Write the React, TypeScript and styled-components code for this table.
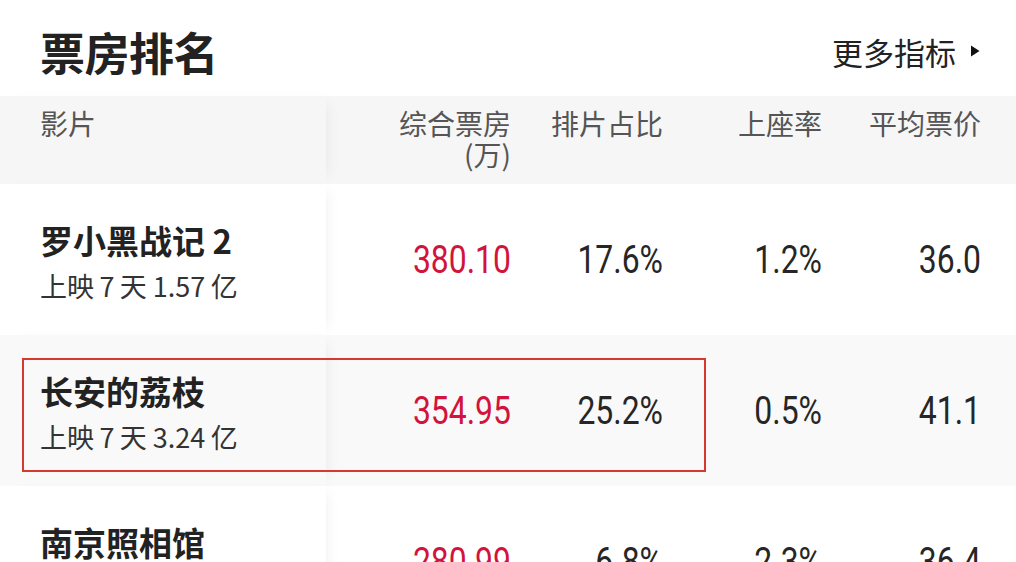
import styled, { createGlobalStyle } from "styled-components";

interface Movie {
  name: string;
  days: string;
  total: string;
  boxOffice: string;
  share: string;
  seat: string;
  price: string;
}

const movies: Movie[] = [
  { name: "罗小黑战记 2", days: "上映\u20097\u2009天", total: "1.57\u2009亿", boxOffice: "380.10", share: "17.6%", seat: "1.2%", price: "36.0" },
  { name: "长安的荔枝", days: "上映\u20097\u2009天", total: "3.24\u2009亿", boxOffice: "354.95", share: "25.2%", seat: "0.5%", price: "41.1" },
  { name: "南京照相馆", days: "上映\u20097\u2009天", total: "2.01\u2009亿", boxOffice: "280.99", share: "6.8%", seat: "2.3%", price: "36.4" },
];

const GlobalStyle = createGlobalStyle`
  html, body {
    margin: 0;
    padding: 0;
    background: #ffffff;
  }
  body {
    font-family: "Noto Sans CJK SC", "Noto Sans", sans-serif;
    color: #222222;
    overflow: hidden;
  }
`;

const App = () => {
  return (
    <>
      <GlobalStyle />
      <Page>
        <TopBar>
          <Title>票房排名</Title>
          <MoreLink>
            更多指标
            <Caret viewBox="0 0 10 12">
              <path d="M1 0.5 L9.5 6 L1 11.5 Z" fill="#111" />
            </Caret>
          </MoreLink>
        </TopBar>

        <HeaderRow>
          <NameCell $bg="#f6f6f6" $top>
            <HeadLabel>影片</HeadLabel>
          </NameCell>
          <HeadLabel $right>
            综合票房
            <br />
            (万)
          </HeadLabel>
          <HeadLabel $right>排片占比</HeadLabel>
          <HeadLabel $right>上座率</HeadLabel>
          <HeadLabel $right>平均票价</HeadLabel>
        </HeaderRow>

        {movies.map((m, i) => {
          const bg = i % 2 === 1 ? "#f9f9f9" : "#ffffff";
          return (
            <Row key={m.name} $bg={bg}>
              {i === 1 && <Highlight />}
              <NameCell $bg={bg}>
                <MovieName>{m.name}</MovieName>
                <MovieSub>
                  {m.days} {m.total}
                </MovieSub>
              </NameCell>
              <Value $red>{m.boxOffice}</Value>
              <Value>{m.share}</Value>
              <Value>{m.seat}</Value>
              <Value>{m.price}</Value>
            </Row>
          );
        })}
      </Page>
    </>
  );
};

const Page = styled.div`
  width: 1016px;
  height: 562px;
  overflow: hidden;
  background: #ffffff;
`;

const TopBar = styled.div`
  height: 96px;
  display: flex;
  align-items: center;
  justify-content: space-between;
  padding: 6px 36px 0 40px;
  box-sizing: border-box;
`;

const Title = styled.h1`
  margin: 0;
  font-size: 45px;
  font-weight: 700;
  color: #222222;
  letter-spacing: -0.5px;
  line-height: 1;
`;

const MoreLink = styled.div`
  display: flex;
  align-items: center;
  gap: 14px;
  font-size: 31px;
  color: #222222;
  line-height: 1;
`;

const Caret = styled.svg`
  width: 10px;
  height: 12px;
`;

const gridCols = "326px 185px 152px 159px 159px";

const HeaderRow = styled.div`
  display: grid;
  grid-template-columns: ${gridCols};
  height: 88px;
  background: #f6f6f6;
  align-items: start;
`;

const HeadLabel = styled.div<{ $right?: boolean }>`
  font-size: 28px;
  line-height: 31px;
  color: #555555;
  padding-top: 12px;
  text-align: ${(p) => (p.$right ? "right" : "left")};
`;

const Row = styled.div<{ $bg: string }>`
  position: relative;
  display: grid;
  grid-template-columns: ${gridCols};
  height: 151px;
  background: ${(p) => p.$bg};
  align-items: center;
`;

const NameCell = styled.div<{ $bg: string; $top?: boolean }>`
  align-self: stretch;
  display: flex;
  flex-direction: column;
  justify-content: ${(p) => (p.$top ? "flex-start" : "center")};
  padding: ${(p) => (p.$top ? "0 0 0 40px" : "6px 0 0 40px")};
  box-sizing: border-box;
  background: ${(p) => p.$bg};
  box-shadow: 8px 0 14px -8px rgba(0, 0, 0, 0.07);
`;

const MovieName = styled.div`
  font-size: 33px;
  font-weight: 600;
  line-height: 46px;
  color: #222222;
  white-space: nowrap;
`;

const MovieSub = styled.div`
  font-size: 27px;
  line-height: 46px;
  color: #333333;
  white-space: nowrap;
`;

const Value = styled.div<{ $red?: boolean }>`
  font-family: Roboto, "Liberation Sans", sans-serif;
  font-size: 38px;
  text-align: right;
  color: ${(p) => (p.$red ? "#d2133c" : "#262626")};
  white-space: nowrap;
  transform: scaleX(0.84);
  transform-origin: right center;
`;

const Highlight = styled.div`
  position: absolute;
  left: 22px;
  top: 23px;
  width: 684px;
  height: 114px;
  border: 2px solid #d63a2f;
  box-sizing: border-box;
  pointer-events: none;
  z-index: 2;
`;

export default App;
